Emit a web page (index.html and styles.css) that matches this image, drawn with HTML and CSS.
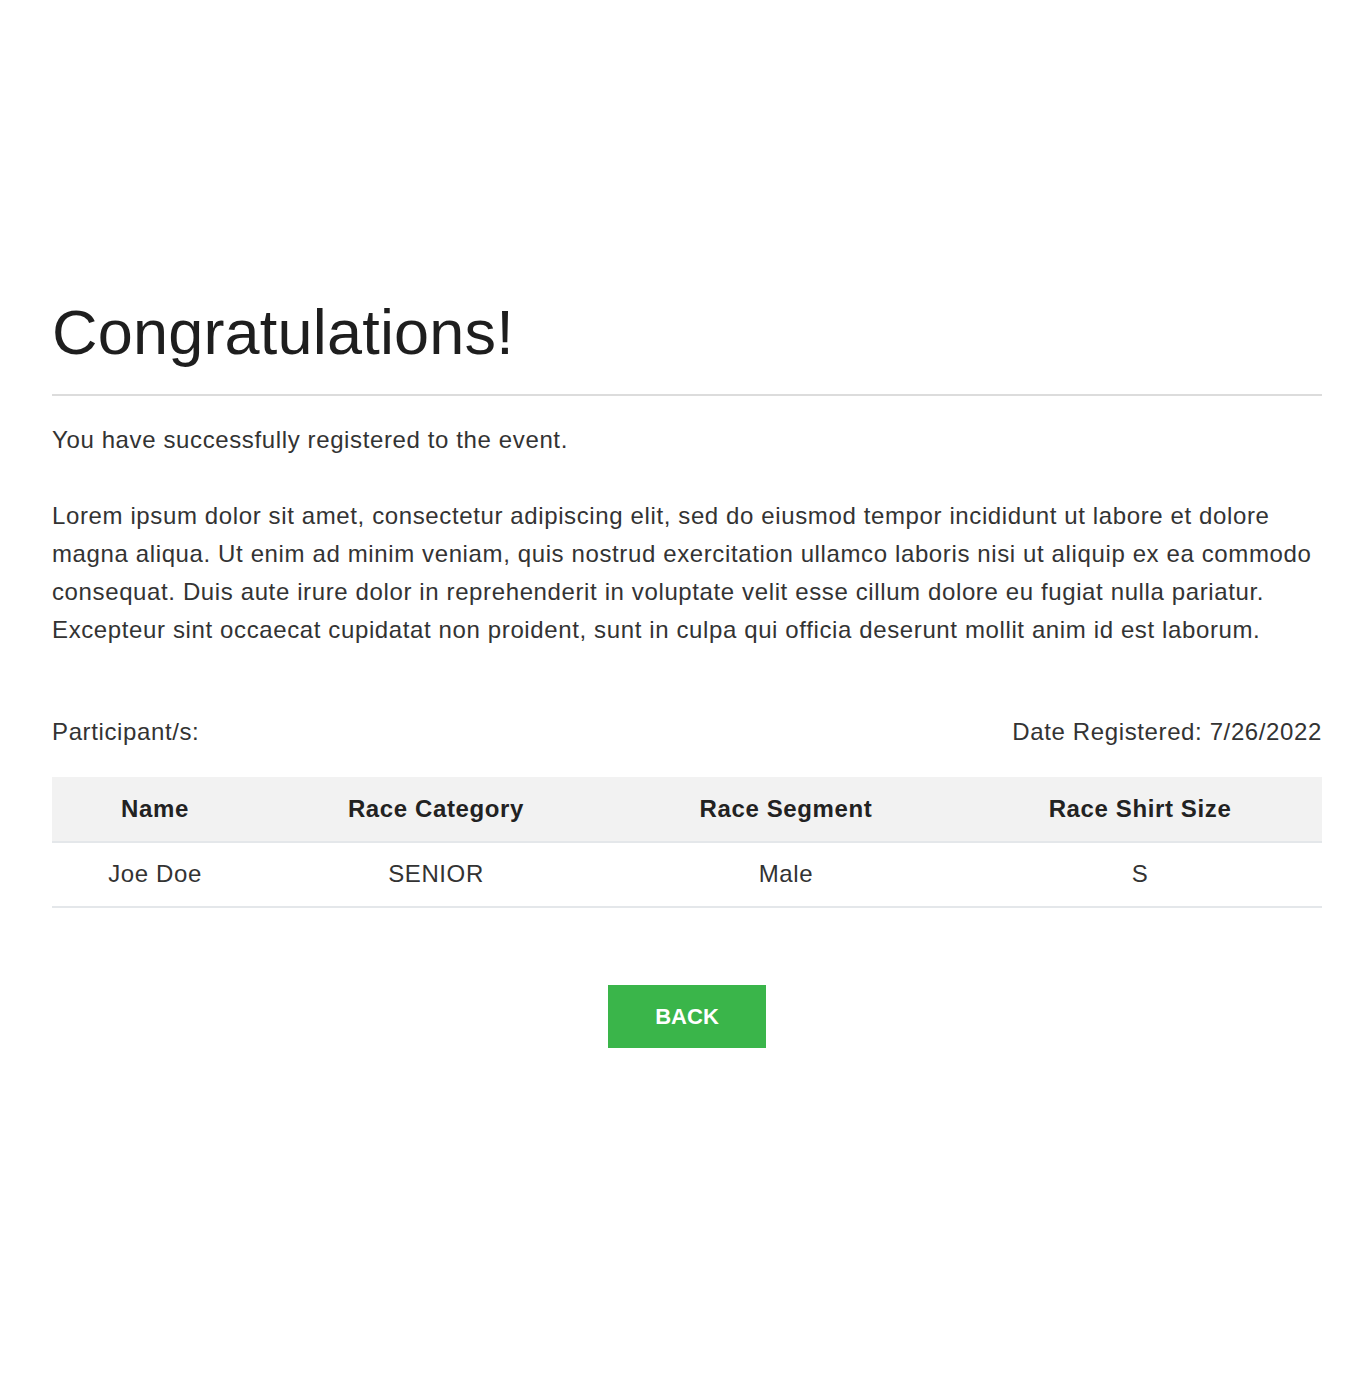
FILE: index.html
```html
<!DOCTYPE html>
<html lang="en">
<head>
<meta charset="utf-8">
<title>Registration Complete</title>
<link rel="stylesheet" href="styles.css">
</head>
<body>
<main class="container">
  <h1 class="title">Congratulations!</h1>
  <hr class="divider">
  <p class="lead">You have successfully registered to the event.</p>
  <p class="body-text">Lorem ipsum dolor sit amet, consectetur adipiscing elit, sed do eiusmod tempor incididunt ut labore et dolore magna aliqua. Ut enim ad minim veniam, quis nostrud exercitation ullamco laboris nisi ut aliquip ex ea commodo consequat. Duis aute irure dolor in reprehenderit in voluptate velit esse cillum dolore eu fugiat nulla pariatur. Excepteur sint occaecat cupidatat non proident, sunt in culpa qui officia deserunt mollit anim id est laborum.</p>
  <div class="meta-row">
    <span>Participant/s:</span>
    <span>Date Registered: 7/26/2022</span>
  </div>
  <table class="participants">
    <colgroup>
      <col class="c1"><col class="c2"><col class="c3"><col class="c4">
    </colgroup>
    <thead>
      <tr><th>Name</th><th>Race Category</th><th>Race Segment</th><th>Race Shirt Size</th></tr>
    </thead>
    <tbody>
      <tr><td>Joe Doe</td><td>SENIOR</td><td>Male</td><td>S</td></tr>
    </tbody>
  </table>
  <div class="actions">
    <button class="btn-back" type="button">BACK</button>
  </div>
</main>
</body>
</html>
```

FILE: styles.css
```css
html, body {
  margin: 0;
  padding: 0;
  background: #ffffff;
}

body {
  font-family: "Liberation Sans", Arial, sans-serif;
  color: #333333;
}

.container {
  width: 1270px;
  padding: 294px 0 200px 52px;
}

.title {
  margin: 0;
  font-size: 63px;
  line-height: 76px;
  font-weight: 400;
  letter-spacing: 0.2px;
  color: #1e1e1e;
}

.divider {
  margin: 24px 0 0;
  height: 0;
  border: 0;
  border-top: 2px solid #dcdcdc;
}

.lead,
.body-text,
.meta-row {
  font-size: 24px;
  line-height: 38px;
  letter-spacing: 0.62px;
}

.lead {
  margin: 25px 0 38px;
}

.body-text {
  margin: 0;
}

.meta-row {
  display: flex;
  justify-content: space-between;
  margin-top: 64px;
}

.participants {
  width: 1270px;
  margin-top: 26px;
  border-collapse: collapse;
  table-layout: fixed;
  font-size: 24px;
  line-height: 38px;
  letter-spacing: 0.62px;
}

.c1 { width: 206px; }
.c2 { width: 356px; }
.c3 { width: 344px; }
.c4 { width: 364px; }

.participants th,
.participants td {
  text-align: center;
  padding: 13px 0;
  border-bottom: 2px solid #e4e7ea;
}

.participants th {
  background: #f2f2f2;
  font-weight: 700;
  color: #222222;
}

.participants td {
  padding: 12px 0 13px;
  color: #333333;
}

.actions {
  display: flex;
  justify-content: center;
  margin-top: 77px;
}

.btn-back {
  width: 158px;
  height: 63px;
  border: 0;
  background: #3ab54a;
  color: #ffffff;
  font-family: "Liberation Sans", Arial, sans-serif;
  font-size: 22px;
  font-weight: 700;
  cursor: pointer;
}
```
